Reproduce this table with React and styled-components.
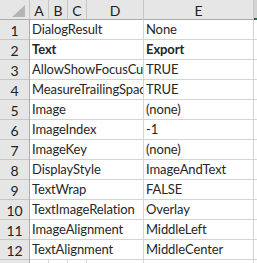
import styled, { createGlobalStyle } from "styled-components";

const GlobalStyle = createGlobalStyle`
  body {
    margin: 0;
    background: #fff;
  }
`;

const rows = [
  ["DialogResult", "None"],
  ["Text", "Export", true],
  ["AllowShowFocusCues", "TRUE"],
  ["MeasureTrailingSpaces", "TRUE"],
  ["Image", "(none)"],
  ["ImageIndex", "-1"],
  ["ImageKey", "(none)"],
  ["DisplayStyle", "ImageAndText"],
  ["TextWrap", "FALSE"],
  ["TextImageRelation", "Overlay"],
  ["ImageAlignment", "MiddleLeft"],
  ["TextAlignment", "MiddleCenter"],
];

function Planilha() {
  return (
    <Sheet>
      <Corner>
        <svg width="29" height="19" viewBox="0 0 29 19">
          <polygon points="12,17 25,17 25,5" fill="#b5b5b5" />
        </svg>
      </Corner>
      <ColHeader>A</ColHeader>
      <ColHeader>B</ColHeader>
      <ColHeader>C</ColHeader>
      <ColHeader>D</ColHeader>
      <ColHeader>E</ColHeader>
      <ColHeader selected />
      {rows.map(([nome, valor, negrito], i) => (
        <Linha key={i}>
          <RowHeader>{i + 1}</RowHeader>
          <Cell span={4} bold={negrito}>{nome}</Cell>
          <Cell bold={negrito}>{valor}</Cell>
          <Cell />
        </Linha>
      ))}
      {/* linha 13, quase toda fora da janela */}
      <RowHeader />
      <Cell />
      <Cell />
      <Cell />
      <Cell />
      <Cell />
      <Cell />
    </Sheet>
  );
}

export default function App() {
  return (
    <>
      <GlobalStyle />
      <Planilha />
    </>
  );
}

const Sheet = styled.div`
  display: grid;
  grid-template-columns: 30px 19px 19px 19px 57px 110px 1fr;
  grid-auto-rows: 20px;
  width: 257px;
  height: 263px;
  overflow: hidden;
  font-family: "Lato", "Liberation Sans", sans-serif;
  font-size: 13px;
  color: #262626;
`;

const Linha = styled.div`
  display: contents;
`;

const Corner = styled.div`
  background: #e6e6e6;
  border-right: 1px solid #c6c6c6;
  border-bottom: 1px solid #ababab;
  box-sizing: border-box;
  svg {
    display: block;
  }
`;

const ColHeader = styled.div`
  display: flex;
  align-items: center;
  justify-content: center;
  box-sizing: border-box;
  background: ${(p) => (p.selected ? "#d3d3d3" : "#e6e6e6")};
  border-right: 1px solid ${(p) => (p.selected ? "#9b9b9b" : "#c6c6c6")};
  border-bottom: ${(p) => (p.selected ? "2px solid #217346" : "1px solid #ababab")};
  font-size: 14px;
  color: #222;
  padding-top: 1px;
`;

const RowHeader = styled.div`
  display: flex;
  align-items: center;
  justify-content: center;
  box-sizing: border-box;
  background: #e6e6e6;
  border-right: 1px solid #ababab;
  border-bottom: 1px solid #c6c6c6;
  font-size: 14px;
  color: #222;
  padding-top: 1px;
`;

const Cell = styled.div`
  grid-column: span ${(p) => p.span || 1};
  box-sizing: border-box;
  border-right: 1px solid #d4d4d4;
  border-bottom: 1px solid #d4d4d4;
  padding: 0 2px;
  line-height: 19px;
  letter-spacing: -0.1px;
  white-space: nowrap;
  overflow: hidden;
  font-weight: ${(p) => (p.bold ? 700 : 400)};
`;
